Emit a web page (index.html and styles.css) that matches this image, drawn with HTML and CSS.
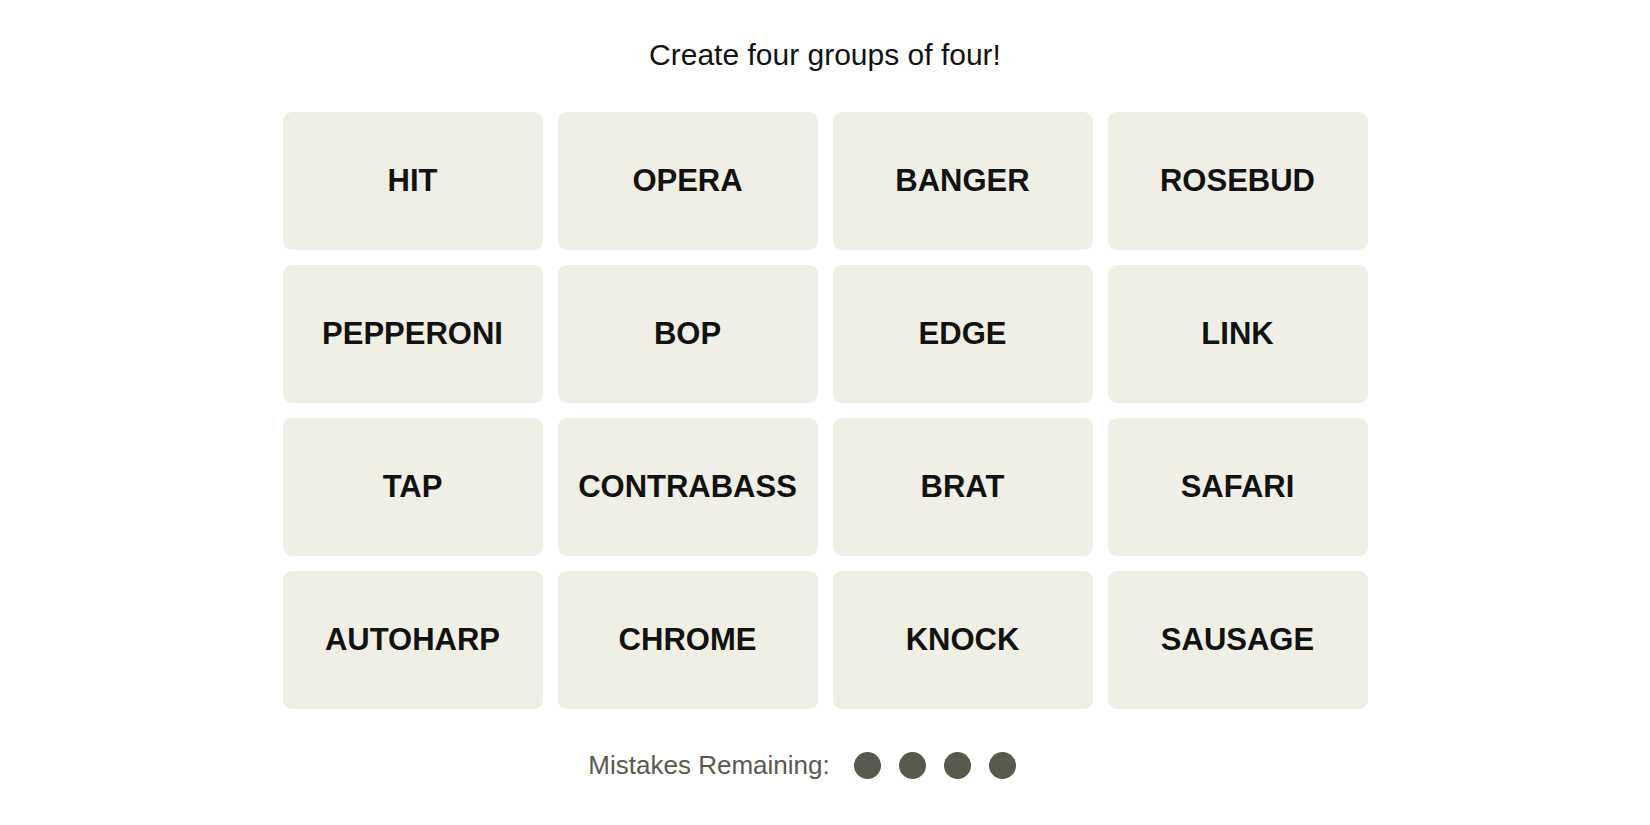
FILE: index.html
```html
<!DOCTYPE html>
<html lang="en">
<head>
<meta charset="utf-8">
<title>Connections</title>
<link rel="stylesheet" href="styles.css">
</head>
<body>
<main class="game">
  <h1 class="prompt">Create four groups of four!</h1>
  <div class="board">
    <button class="tile">HIT</button>
    <button class="tile">OPERA</button>
    <button class="tile">BANGER</button>
    <button class="tile">ROSEBUD</button>
    <button class="tile">PEPPERONI</button>
    <button class="tile">BOP</button>
    <button class="tile">EDGE</button>
    <button class="tile">LINK</button>
    <button class="tile">TAP</button>
    <button class="tile">CONTRABASS</button>
    <button class="tile">BRAT</button>
    <button class="tile">SAFARI</button>
    <button class="tile">AUTOHARP</button>
    <button class="tile">CHROME</button>
    <button class="tile">KNOCK</button>
    <button class="tile">SAUSAGE</button>
  </div>
  <div class="mistakes">
    <span class="mistakes-label">Mistakes Remaining:</span>
    <span class="dots">
      <span class="dot"></span>
      <span class="dot"></span>
      <span class="dot"></span>
      <span class="dot"></span>
    </span>
  </div>
</main>
</body>
</html>
```
FILE: styles.css
```css
html, body {
  margin: 0;
  padding: 0;
  background: #ffffff;
}

body {
  font-family: "Liberation Sans", Arial, sans-serif;
  color: #121212;
}

.game {
  display: flex;
  flex-direction: column;
  align-items: center;
  padding-top: 37px;
}

.prompt {
  margin: 0;
  font-size: 30px;
  line-height: 36px;
  font-weight: 400;
  color: #121212;
}

.board {
  margin-top: 39px;
  display: grid;
  grid-template-columns: repeat(4, 260px);
  grid-auto-rows: 138px;
  gap: 15px;
}

.tile {
  border: none;
  border-radius: 9px;
  background: #efefe6;
  font-family: "Liberation Sans", Arial, sans-serif;
  font-weight: 700;
  font-size: 31px;
  color: #121212;
  display: flex;
  align-items: center;
  justify-content: center;
  padding: 0;
  letter-spacing: 0;
}

.mistakes {
  margin-top: 38px;
  display: flex;
  align-items: center;
  height: 36px;
  padding-right: 46px;
}

.mistakes-label {
  font-size: 26px;
  line-height: 32px;
  color: #5a594e;
}

.dots {
  display: flex;
  align-items: center;
  gap: 18px;
  margin-left: 24px;
}

.dot {
  width: 27px;
  height: 27px;
  border-radius: 50%;
  background: #5a594e;
}
```
